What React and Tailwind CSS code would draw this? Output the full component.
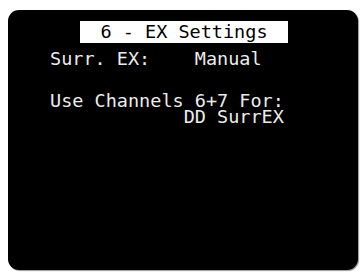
import React from "react";

const mono = { fontFamily: '"DejaVu Sans Mono", "Liberation Mono", monospace' };

const App = () => {
  return (
    <div className="w-[362px] h-[276px] bg-white overflow-hidden pt-[10px] pl-[8px]">
      {/* OSD screen */}
      <div
        className="w-[350px] h-[260px] bg-black rounded-[11px] shadow-[1px_1px_1px_#9a9a9a] flex flex-col text-[18.5px] text-[#ececec]"
        style={mono}
      >
        <div className="ml-[72px] mt-[11px] w-[208px] h-[22px] bg-white text-black leading-[22px] text-center whitespace-pre">
          6 - EX Settings
        </div>
        <div className="ml-[42px] mt-[8px] leading-[15px] whitespace-pre">Surr. EX:    Manual</div>
        <div className="ml-[42px] mt-[27px] leading-[15px] whitespace-pre">Use Channels 6+7 For:</div>
        <div className="ml-[42px] mt-[1px] leading-[15px] whitespace-pre">            DD SurrEX</div>
      </div>
    </div>
  );
};

export default App;
